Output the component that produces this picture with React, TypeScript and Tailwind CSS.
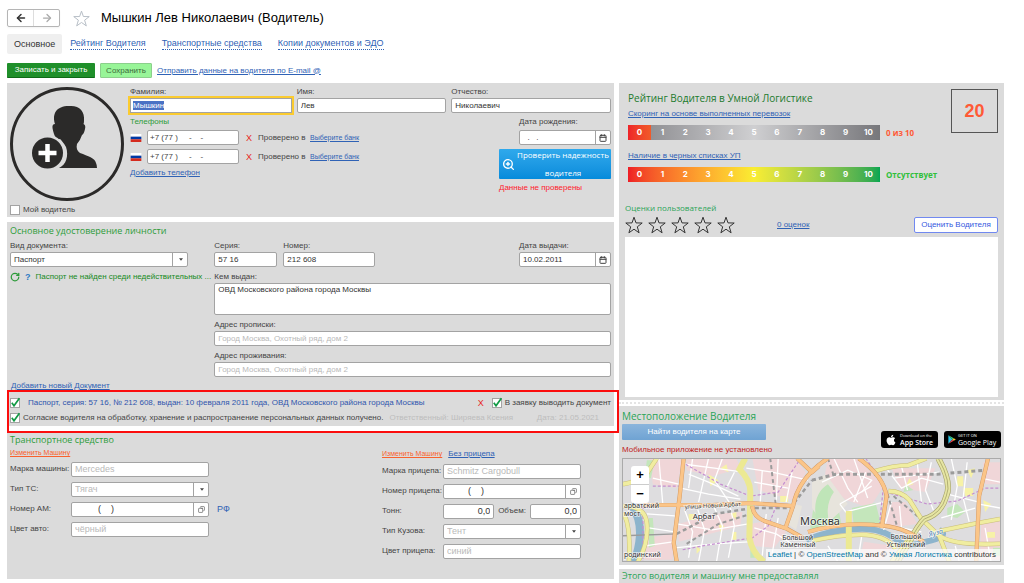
import React, { useEffect, useRef } from 'react';
import { ArrowLeft, ArrowRight, Calendar, Copy, RotateCw, ZoomIn } from 'lucide-react';
import { FaApple } from 'react-icons/fa';

const fieldClass =
  'h-[15px] w-full min-w-0 rounded-[2px] border border-[#a3a3a3] bg-white px-[3px] leading-3 text-[#333] outline-none placeholder:text-[#b9b9b9]';

const linkClass = 'text-[#2f62b5] underline';

interface LabelProps {
  htmlFor: string;
  children: React.ReactNode;
  className?: string;
}

const Label: React.FC<LabelProps> = ({ htmlFor, children, className = '' }) => (
  <label htmlFor={htmlFor} className={`block leading-3 whitespace-nowrap ${className}`}>
    {children}
  </label>
);

interface FieldProps {
  id: string;
  label: string;
  value?: string;
  placeholder?: string;
  className?: string;
}

const Field: React.FC<FieldProps> = ({ id, label, value, placeholder, className = '' }) => (
  <div className={className}>
    <Label htmlFor={id}>{label}</Label>
    <input id={id} type="text" defaultValue={value} placeholder={placeholder} className={`block ${fieldClass}`} />
  </div>
);

interface ButtonFieldProps {
  id: string;
  value?: string;
  placeholder?: string;
  buttonLabel: string;
  icon: React.ReactNode;
  inputClass?: string;
}

// Input with a small button attached to its right edge
const ButtonField: React.FC<ButtonFieldProps> = ({ id, value, placeholder, buttonLabel, icon, inputClass = '' }) => (
  <div className="flex h-[15px] w-full overflow-hidden rounded-[2px] border border-[#a3a3a3] bg-white">
    <input
      id={id}
      type="text"
      defaultValue={value}
      placeholder={placeholder}
      className={`min-w-0 flex-1 px-[3px] text-[#333] outline-none ${inputClass}`}
    />
    <button
      type="button"
      aria-label={buttonLabel}
      className="flex w-[15px] shrink-0 items-center justify-center border-l border-[#a3a3a3] text-[#444]"
    >
      {icon}
    </button>
  </div>
);

interface SelectFieldProps {
  id: string;
  value: string;
  className?: string;
}

const SelectField: React.FC<SelectFieldProps> = ({ id, value, className = '' }) => (
  <div className="relative w-full">
    <select id={id} defaultValue={value} className={`block appearance-none ${fieldClass} ${className}`}>
      <option value={value}>{value}</option>
    </select>
    <span className="pointer-events-none absolute inset-y-0 right-0 flex w-4 items-center justify-center border-l border-[#a3a3a3]">
      <svg viewBox="0 0 6 4" className="h-[3px] w-[4px]">
        <path d="M0 0h6L3 4z" fill="#444" />
      </svg>
    </span>
  </div>
);

interface CheckProps {
  id: string;
  checked?: boolean;
  children: React.ReactNode;
  className?: string;
}

const Check: React.FC<CheckProps> = ({ id, checked = false, children, className = '' }) => (
  <div className={`flex items-center gap-[3px] whitespace-nowrap ${className}`}>
    <span className="relative block h-[10px] w-[10px] shrink-0">
      <input
        id={id}
        type="checkbox"
        defaultChecked={checked}
        className="peer block h-[10px] w-[10px] appearance-none border border-[#a3a3a3] bg-white"
      />
      <svg
        viewBox="0 0 10 10"
        className="pointer-events-none absolute inset-0 hidden h-[10px] w-[10px] overflow-visible peer-checked:block"
      >
        <path d="M1.8 4.8 4 7.8 9.4 0.2" fill="none" stroke="#119a45" strokeWidth="1.7" />
      </svg>
    </span>
    <label htmlFor={id} className="leading-3">
      {children}
    </label>
  </div>
);

const Star: React.FC<{ className?: string; stroke: string }> = ({ className = '', stroke }) => (
  <svg viewBox="0 0 18 18" className={className}>
    <path
      d="M9 1.2 11 6.9 17.2 7 12.3 10.8 14.1 16.8 9 13.2 3.9 16.8 5.7 10.8 0.8 7 7 6.9Z"
      fill="none"
      stroke={stroke}
      strokeWidth="1"
    />
  </svg>
);

const Avatar = () => (
  <svg viewBox="0 0 116 116" className="block h-[116px] w-[116px]">
    <circle cx="58" cy="58" r="55.5" fill="none" stroke="#2b2a29" strokeWidth="3" />
    <path
      d="M60 20C70 19 76 25 75 35Q75 37 74.500 38Q77 39 76 43Q75 48 73 49Q71 55 68 58C67 62 68 65 71 67C79 70 86 72 87 77Q88 79 88 82H50C57 79 60 70 57 61C55 57 52 54 51 53Q47 54 45 48Q44 45 43.500 42Q43 38 46 38C43 28 47 20 60 20Z"
      fill="#2b2a29"
    />
    <circle cx="38.500" cy="67" r="18" fill="#dbdbdb" />
    <circle cx="38.500" cy="67" r="15.500" fill="#2b2a29" />
    <path d="M38.500 58v18M29.500 67h18" stroke="#fff" strokeWidth="4.500" />
  </svg>
);

const Flag = () => (
  <svg viewBox="0 0 12 9" className="h-[8px] w-[12px] shrink-0">
    <path d="M0 0h12v3H0z" fill="#fff" />
    <path d="M0 3h12v3H0z" fill="#0039a6" />
    <path d="M0 6h12v3H0z" fill="#d52b1e" />
  </svg>
);

const scale = [0, 1, 2, 3, 4, 5, 6, 7, 8, 9, 10];

const ScoreBar: React.FC<{ className: string; firstClass?: string }> = ({ className, firstClass = '' }) => (
  <div
    className={`grid h-[15px] w-[252px] grid-cols-11 text-center font-['Inter',sans-serif] text-[8px] leading-[15px] font-bold text-white ${className}`}
  >
    {scale.map((n) => (
      <span key={n} className={n === 0 ? firstClass : ''}>
        {n}
      </span>
    ))}
  </div>
);

const phones = ['phone-1', 'phone-2'];

const DriverPanel = () => {
  const surnameRef = useRef<HTMLInputElement>(null);

  useEffect(() => {
    surnameRef.current?.focus();
    surnameRef.current?.select();
  }, []);

  return (
    <section className="flex h-[134px] gap-[5px] bg-[#dbdbdb] pt-[3px] pr-[3px] pl-[2px]">
      <div className="w-[116px] shrink-0">
        <button type="button" aria-label="Фото" className="block">
          <Avatar />
        </button>
        <Check id="my-driver" className="mt-[2px] pl-px">
          Мой водитель
        </Check>
      </div>
      <div className="min-w-0 flex-1">
        <div className="grid grid-cols-[162fr_150fr_160fr] gap-[5px]">
          <div>
            <Label htmlFor="surname">Фамилия:</Label>
            <input
              id="surname"
              ref={surnameRef}
              type="text"
              defaultValue="Мышкин"
              className="block h-[15px] w-full min-w-0 border border-[#a3a3a3] bg-white px-[2px] outline-2 outline-[#fbcb2f] selection:bg-[#4a72c4] selection:text-white"
            />
          </div>
          <Field id="name" label="Имя:" value="Лев" />
          <Field id="patronymic" label="Отчество:" value="Николаевич" />
        </div>
        <div className="mt-[3px] flex justify-between">
          <div>
            <h2 className="leading-3 text-[#2d9b3a]">Телефоны</h2>
            <div className="mt-[2px] flex flex-col gap-1">
              {phones.map((id) => (
                <div key={id} className="flex items-center whitespace-nowrap">
                  <Flag />
                  <input
                    id={id}
                    type="text"
                    aria-label="Телефон"
                    defaultValue="+7 (77 )     -    -"
                    className="ml-[5px] h-[15px] w-[92px] rounded-[2px] border border-[#a3a3a3] bg-white px-[2px] whitespace-pre outline-none"
                  />
                  <button type="button" aria-label="Удалить телефон" className="ml-[7px] text-[9px] text-[#e8261d]">
                    X
                  </button>
                  <span className="ml-[6px] w-[52px]">Проверено в</span>
                  <a href="#bank" className={`text-[7px] ${linkClass}`}>
                    Выберите банк
                  </a>
                </div>
              ))}
            </div>
            <a href="#add-phone" className={`mt-[3px] inline-block leading-3 ${linkClass}`}>
              Добавить телефон
            </a>
          </div>
          <div className="flex w-[112px] flex-col items-end">
            <div className="w-[92px]">
              <Label htmlFor="birthday">Дата рождения:</Label>
              <div className="mt-[2px]">
                <ButtonField
                  id="birthday"
                  value="  .   ."
                  buttonLabel="Выбрать дату"
                  icon={<Calendar size={8} strokeWidth={3} />}
                />
              </div>
            </div>
            <button
              type="button"
              className="mt-1 flex h-[30px] w-full items-center rounded-[1px] bg-linear-to-b from-[#2fa9ec] to-[#058bdb] pl-[3px] text-white"
            >
              <ZoomIn size={13} strokeWidth={2.5} className="shrink-0" />
              <span className="flex-1 text-center font-['Open_Sans',sans-serif] leading-[18px]">
                Проверить надежность водителя
              </span>
            </button>
            <p className="mt-[3px] w-full leading-3 text-[#ff1a2d]">Данные не проверены</p>
          </div>
        </div>
      </div>
    </section>
  );
};

const DocumentPanel = () => (
  <section className="mt-[5px] bg-[#dbdbdb] pt-[3px]">
    <div className="px-[3px]">
      <h2 className="font-['Open_Sans',sans-serif] text-[9px] leading-3 text-[#2d9b3a]">
        Основное удостоверение личности
      </h2>
      <div className="mt-[3px] grid grid-cols-[1fr_2fr] gap-[6px]">
        <div className="min-w-0">
          <div className="w-[178px]">
            <Label htmlFor="doc-type">Вид документа:</Label>
            <SelectField id="doc-type" value="Паспорт" />
          </div>
          <p className="mt-[4px] flex h-3 items-center gap-[5px] whitespace-nowrap text-[#168a22]">
            <RotateCw size={10} strokeWidth={3} className="shrink-0 text-[#2d9b3a]" />
            <a href="#help" className="text-[9px] font-bold text-[#2d7cc4]">
              ?
            </a>
            <span>Паспорт не найден среди недействительных ...</span>
          </p>
        </div>
        <div className="min-w-0">
          <div className="flex gap-[6px]">
            <Field id="series" label="Серия:" value="57 16" className="w-[63px]" />
            <Field id="number" label="Номер:" value="212 608" className="w-[92px]" />
            <div className="ml-auto w-[92px]">
              <Label htmlFor="issued">Дата выдачи:</Label>
              <ButtonField
                id="issued"
                value="10.02.2011"
                buttonLabel="Выбрать дату"
                icon={<Calendar size={8} strokeWidth={3} />}
              />
            </div>
          </div>
          <div className="mt-[4px]">
            <Label htmlFor="issuer">Кем выдан:</Label>
            <textarea
              id="issuer"
              defaultValue="ОВД Московского района города Москвы"
              className="block h-8 w-full resize-none rounded-[2px] border border-[#a3a3a3] bg-white px-[3px] leading-3 text-[#333] outline-none"
            />
          </div>
          <Field
            id="registration"
            label="Адрес прописки:"
            placeholder="Город Москва, Охотный ряд, дом 2"
            className="mt-1"
          />
          <Field
            id="residence"
            label="Адрес проживания:"
            placeholder="Город Москва, Охотный ряд, дом 2"
            className="mt-1"
          />
        </div>
      </div>
      <a href="#add-doc" className="mt-[3px] ml-px block w-fit leading-3 text-[#2f62b5] underline">
        Добавить новый Документ
      </a>
    </div>
    <div className="relative px-[3px] pt-[3px] pb-px">
      {/* Red frame around the document and consent rows */}
      <div className="pointer-events-none absolute -top-[2px] -right-[5px] -bottom-[7px] left-0 z-10 border-2 border-[#fb0d0d]" />
      <div className="flex h-[15px] items-center justify-between">
        <Check id="doc-row" checked>
          <span className="ml-[5px] text-[#2f55ad]">
            Паспорт, серия: 57 16, № 212 608, выдан: 10 февраля 2011 года, ОВД Московского района города Москвы
          </span>
        </Check>
        <div className="flex items-center gap-2">
          <button type="button" aria-label="Удалить документ" className="text-[9px] text-[#e8261d]">
            X
          </button>
          <Check id="in-request" checked>
            В заявку выводить документ
          </Check>
        </div>
      </div>
      <div className="flex h-[15px] items-center whitespace-nowrap">
        <Check id="consent" checked>
          Согласие водителя на обработку, хранение и распространение персональных данных получено.
        </Check>
        <span className="ml-[6px] text-[#bdbdbd]">Ответственный: Ширяева Ксения</span>
        <span className="mr-3 ml-auto text-[#bdbdbd]">Дата: 21.05.2021</span>
      </div>
    </div>
  </section>
);

interface RowProps {
  id: string;
  label: string;
  children: React.ReactNode;
  after?: React.ReactNode;
}

const Row: React.FC<RowProps> = ({ id, label, children, after }) => (
  <div className="flex h-5 items-center">
    <Label htmlFor={id} className="w-[61px] shrink-0">
      {label}
    </Label>
    <div className="flex w-[138px] shrink-0 items-center text-[9px]">{children}</div>
    {after}
  </div>
);

const VehiclePanel = () => (
  <section className="mt-[5px] grid grid-cols-[372fr_229fr] bg-[#dbdbdb] px-[3px] pt-[3px] pb-[18px]">
    <div>
      <h2 className="font-['Open_Sans',sans-serif] text-[9px] leading-3 text-[#2d9b3a]">Транспортное средство</h2>
      <a href="#truck" className="mt-px block w-fit text-[7px] leading-3 text-[#f9622d] underline">
        Изменить Машину
      </a>
      <Row id="truck-brand" label="Марка машины:">
        <input id="truck-brand" type="text" placeholder="Mercedes" className={fieldClass} />
      </Row>
      <Row id="truck-type" label="Тип ТС:">
        <SelectField id="truck-type" value="Тягач" className="text-[#b9b9b9]" />
      </Row>
      <Row
        id="truck-number"
        label="Номер АМ:"
        after={
          <a href="#country" className="ml-2 text-[9px] text-[#2f62b5]">
            РФ
          </a>
        }
      >
        <ButtonField
          id="truck-number"
          value="(    )"
          buttonLabel="Открыть номер"
          icon={<Copy size={7} className="-scale-x-100" />}
          inputClass="pl-[26px]"
        />
      </Row>
      <Row id="truck-color" label="Цвет авто:">
        <input id="truck-color" type="text" placeholder="чёрный" className={fieldClass} />
      </Row>
    </div>
    <div className="pt-[14px]">
      <div className="flex h-3 items-center gap-[6px] leading-3">
        <a href="#trailer" className="text-[7px] text-[#f9622d] underline">
          Изменить Машину
        </a>
        <a href="#no-trailer" className={linkClass}>
          Без прицепа
        </a>
      </div>
      <div className="mt-px">
        <Row id="trailer-brand" label="Марка прицепа:">
          <input id="trailer-brand" type="text" placeholder="Schmitz Cargobull" className={fieldClass} />
        </Row>
        <Row id="trailer-number" label="Номер прицепа:">
          <ButtonField
            id="trailer-number"
            value="(    )"
            buttonLabel="Открыть номер прицепа"
            icon={<Copy size={7} className="-scale-x-100" />}
            inputClass="pl-[24px]"
          />
        </Row>
        <Row id="tons" label="Тонн:">
          <input id="tons" type="text" defaultValue="0,0" className={`${fieldClass} flex-1 text-right`} />
          <label htmlFor="volume" className="mx-1 shrink-0 text-[8px]">
            Объем:
          </label>
          <input id="volume" type="text" defaultValue="0,0" className={`${fieldClass} flex-1 text-right`} />
        </Row>
        <Row id="body-type" label="Тип Кузова:">
          <SelectField id="body-type" value="Тент" className="text-[#b9b9b9]" />
        </Row>
        <Row id="trailer-color" label="Цвет прицепа:">
          <input id="trailer-color" type="text" placeholder="синий" className={fieldClass} />
        </Row>
      </div>
    </div>
  </section>
);

const RatingPanel = () => (
  <section className="bg-[#dbdbdb] px-[6px] pt-[6px] pb-[3px]">
    <div className="flex items-start justify-between pl-[3px]">
      <div>
        <h2 className="pt-px font-['Open_Sans',sans-serif] text-[10px] leading-4 text-[#1c7a2c]">
          Рейтинг Водителя в Умной Логистике
        </h2>
        <a href="#scoring" className={`mt-[2px] block w-fit leading-3 ${linkClass}`}>
          Скоринг на основе выполненных перевозок
        </a>
        <div className="mt-[5px] flex items-center gap-[6px] font-['Open_Sans',sans-serif]">
          <ScoreBar
            className="bg-linear-to-r from-[#858589] via-[#cfcfd1] to-[#77777b]"
            firstClass="bg-linear-to-r from-[#ee2229] to-[#f15a29]"
          />
          <span className="font-bold text-[#ff5a36]">0 из 10</span>
        </div>
        <a href="#blacklists" className={`mt-[10px] block w-fit leading-3 ${linkClass}`}>
          Наличие в черных списках УП
        </a>
        <div className="mt-[5px] flex items-center gap-[6px] font-['Open_Sans',sans-serif]">
          <ScoreBar className="bg-linear-to-r from-[#ee1c25] via-[#f9ed32] to-[#00a651]" />
          <span className="font-bold text-[#2fbf3a]">Отсутствует</span>
        </div>
      </div>
      <div className="flex h-[44px] w-[47px] shrink-0 items-center justify-center border border-[#555] text-[18px] font-bold text-[#ff5a36]">
        20
      </div>
    </div>
    <h2 className="mt-5 font-['Open_Sans',sans-serif] leading-3 text-[#2aa457]">Оценки пользователей</h2>
    <div className="mt-[2px] flex h-[18px] items-center">
      <div className="flex gap-[5px]">
        {[1, 2, 3, 4, 5].map((n) => (
          <button key={n} type="button" aria-label={`Оценка ${n}`}>
            <Star className="block h-[18px] w-[18px]" stroke="#333" />
          </button>
        ))}
      </div>
      <a href="#reviews" className={`ml-[42px] ${linkClass}`}>
        0 оценок
      </a>
      <button
        type="button"
        className="ml-auto h-4 w-[84px] rounded-[2px] border border-[#7189f0] bg-white text-[#3558e0]"
      >
        Оценить Водителя
      </button>
    </div>
    <div className="mt-[3px] h-[160px] bg-white" />
  </section>
);

const yellowRoads = [
  'M0 26Q22 22 26 12L34 0',
  'M0 48Q22 48 24 65Q26 85 15 104',
  'M0 55Q8 66 6 104',
  'M253 13Q272 7 287 7L305 0',
  'M267 33Q280 33 288 42L300 61L318 78L328 104',
  'M318 73L357 65L379 61',
  'M318 78Q333 88 379 86',
  'M190 83Q220 76 245 77Q266 79 274 91',
  'M300 65L270 104',
];

const orangeRoads = [
  'M61 0L57 38L51 85L54 104',
  'M21 47L90 47L128 45L171 48',
  'M171 48Q176 20 206 0',
  'M175 0L190 14L197 8',
  'M130 48Q131 60 145 64L165 71L181 80',
  'M171 48L163 71',
  'M186 74Q220 64 253 67Q282 68 302 84',
  'M237 0Q262 18 265 38L260 70',
  'M367 0L358 38L355 104',
];

const streets = [
  'M62 6L92 10L121 14',
  'M66 16L86 24L116 38',
  'M70 0L66 30',
  'M86 0L76 44',
  'M100 0L92 22L108 46',
  'M104 30L112 14',
  'M58 30L86 36L118 41',
  'M62 52L70 74L66 100',
  'M74 48L82 72L76 104',
  'M92 50L100 68L94 104',
  'M108 50L112 68L106 100',
  'M54 66L90 72L126 66',
  'M52 90L92 86L126 84',
  'M24 56L52 58',
  'M26 70L52 74',
  'M22 88L50 84',
  'M36 0L40 46',
  'M30 20L56 26',
  'M124 10L150 14L186 22',
  'M132 24L166 30',
  'M140 12L138 44',
  'M156 0L154 46',
  'M170 14L164 44',
  'M132 70L154 76L176 90',
  'M144 56L140 98',
  'M156 60L150 96',
  'M200 24L226 12L250 22L240 34',
  'M218 46L250 28',
  'M218 46L224 54L262 44',
  'M212 0L226 30L236 44',
  'M232 0L246 40',
  'M244 14L232 44',
  'M266 12L280 30L300 20L322 26',
  'M280 8L286 32',
  'M296 6L300 44',
  'M310 4L304 32L312 52',
  'M272 20L318 14',
  'M270 44L262 72',
  'M278 48L280 70L300 74',
  'M330 0L336 28L330 62',
  'M346 4L342 40L348 64',
  'M326 36L358 44',
  'M320 60L354 50',
  'M360 20L379 24',
  'M358 46L379 50',
  'M364 70L370 104',
  'M334 88L338 104',
  'M240 78L236 104',
  'M206 88L216 104',
];

const CityMap = () => (
  <svg viewBox="0 0 379 104" preserveAspectRatio="xMidYMid slice" className="block h-full w-full">
    <path d="M0 0h379v104H0z" fill="#dedddf" />
    {/* Blocks */}
    <g fill="#f0d6d8">
      <path d="M26 0h34l-6 30-24-4zM64 0h50l4 10-28 8-26-6zM130 0h42l12 14-14 28-34-10z" />
      <path d="M56 66l34-10 30-2-2 14-62 16zM128 66l20-4 16 12-12 16-24-2zM24 80l26-4v26H22z" />
      <path d="M206 0h30l26 28-14 22-24-8-22-20zM268 44l16 0 12 22-32 4zM270 10l44 0-10 24-26-4z" />
      <path d="M242 84l28 4-8 14h-24zM360 62h19v40h-20zM362 4h17v22h-15z" />
    </g>
    {/* Parks */}
    <g fill="#c4e6bb">
      <path d="M192 46q2-14 12-26l10 12-14 38-12 2zM230 50l24-5 5 20-27 2zM220 68h-12l8-20zM24 2l8 0-4 18-6-2z" />
      <path d="M326 50l10-4 8 8-8 6-10-2zM128 92l14 8h-14zM26 60l4 0 2 28-6 2zM372 90h7v8h-7zM284 26l8 6-10 2z" />
    </g>
    <g fill="#e7e4dc">
      <path d="M190 24l14-8 22 30-8 8-16 14-12-18zM166 44l14 4-6 24-8-6z" />
    </g>
    <path d="M194 60Q190 36 206 26L212 34Q202 48 208 68L192 70Z" fill="#bfe5b8" />
    <g fill="#f7f2a8">
      <path d="M86 16l10 6-8 6zM98 10l6-4 2 8zM66 56h6v6h-6zM108 56l6-2v8zM96 66l6 2-4 6zM110 74h4v8h-4zM158 38h8v6h-8z" />
      <path d="M336 18h6v10h-6zM346 12l8-2-4 10zM342 30h10v8h-8zM288 20l4 6-8 2zM362 42l8 4-6 8zM366 74h8v6h-8zM74 88l4 4-4 4z" />
    </g>
    {/* Water */}
    <g fill="none" stroke="#8db4cc">
      <path d="M8 46Q18 60 17 78Q16 92 11 104" strokeWidth="8" />
      <path d="M184 82Q215 70 245 71Q264 72 278 84Q290 90 304 84Q330 78 318 72" strokeWidth="6" />
    </g>
    <g fill="none" stroke="#fff" strokeWidth="1.300">
      {streets.map((d) => (
        <path key={d} d={d} />
      ))}
    </g>
    {/* Railways and tunnels */}
    <g fill="none" stroke="#9b9b9b">
      <path d="M0 78Q30 77 54 76" strokeWidth="1.500" />
      <path d="M54 76L92 56L130 50L168 50L190 22" strokeWidth="2.500" strokeDasharray="4 3" />
      <path d="M64 86L96 66L128 56" strokeWidth="2" strokeDasharray="4 3" />
      <path d="M190 22L214 16L316 16L364 12" strokeWidth="3" strokeDasharray="4 3" />
      <path d="M148 0L154 50M206 0L212 18M266 36L276 70M272 38L310 70" strokeWidth="2" strokeDasharray="4 3" />
    </g>
    <g fill="none" stroke="#c58fd0" strokeWidth="1.200" strokeDasharray="3 2">
      <path d="M63 6L98 26L128 38L156 34L176 4" />
      <path d="M30 28H56M60 92L80 88L130 80L146 68L154 48" />
      <path d="M264 34L306 46L336 43L364 30H379M20 48V104M244 0L262 26L258 66" />
    </g>
    <g fill="none" stroke="#c9bd7a" strokeWidth="4.600" strokeLinejoin="round">
      {yellowRoads.map((d) => (
        <path key={d} d={d} />
      ))}
    </g>
    <g fill="none" stroke="#f0eda0" strokeWidth="3.600" strokeLinejoin="round">
      {yellowRoads.map((d) => (
        <path key={d} d={d} />
      ))}
    </g>
    <g fill="none" stroke="#ece993" strokeWidth="6">
      <path d="M123 0L117 11Q128 22 128 34L127 80Q130 96 142 104M227 53V104" />
    </g>
    <path d="M317 0Q331 25 325 38Q320 56 303 61Q296 68 288 84L276 104" fill="none" stroke="#a6a368" strokeWidth="6" />
    <path d="M317 0Q331 25 325 38Q320 56 303 61Q296 68 288 84L276 104" fill="none" stroke="#e6e5a4" strokeWidth="4.800" />
    <path d="M317 0Q331 25 325 38Q320 56 303 61Q296 68 288 84L276 104" fill="none" stroke="#a6a368" strokeWidth="0.800" />
    <g fill="none" stroke="#cf9560" strokeWidth="4.200" strokeLinejoin="round">
      {orangeRoads.map((d) => (
        <path key={d} d={d} />
      ))}
    </g>
    <g fill="none" stroke="#fbc588" strokeWidth="3.400" strokeLinejoin="round">
      {orangeRoads.map((d) => (
        <path key={d} d={d} />
      ))}
    </g>
    {/* Place names */}
    <g fill="#333" stroke="#fff" strokeOpacity="0.7" strokeWidth="1.500" paintOrder="stroke" fontFamily="Noto Sans, sans-serif">
      <text x="178" y="67" fontSize="11">
        Москва
      </text>
      <text x="70" y="61" fontSize="8">
        Арбат
      </text>
      <text x="62" y="51" fontSize="6" transform="rotate(-3 62 51)">
        улица Новый Арбат
      </text>
      <text x="1" y="50" fontSize="7">
        арбатский
      </text>
      <text x="1" y="58" fontSize="7">
        мост
      </text>
      <text x="1" y="99" fontSize="7">
        родинский
      </text>
      <text x="160" y="82" fontSize="7">
        Большой
      </text>
      <text x="158" y="89" fontSize="7">
        Каменный
      </text>
      <text x="269" y="81" fontSize="7">
        Большой
      </text>
      <text x="265" y="89" fontSize="7">
        Устьинский
      </text>
      <text x="308" y="79" fontSize="7" fill="#4a80b5" fontStyle="italic" transform="rotate(-14 308 79)">
        Яуза
      </text>
    </g>
  </svg>
);

const PlayLogo = () => (
  <svg viewBox="0 0 10 11" className="h-[9px] w-2 shrink-0">
    <path d="M0.500 0.300 5.500 5.500 0.500 10.700Z" fill="#28c3e8" />
    <path d="M0.500 0.300 7.200 4 5.500 5.500Z" fill="#3fd07a" />
    <path d="M0.500 10.700 7.200 7 5.500 5.500Z" fill="#ee4350" />
    <path d="M7.200 4 9.800 5.500 7.200 7 5.500 5.500Z" fill="#fbc52f" />
  </svg>
);

const LocationPanel = () => (
  <section className="bg-[#dbdbdb] px-[3px] pt-[2px] pb-[3px]">
    <h2 className="font-['Open_Sans',sans-serif] text-[10px] leading-4 text-[#2aa457]">Местоположение Водителя</h2>
    <div className="flex items-start justify-between">
      <div>
        <button
          type="button"
          className="block h-4 w-[144px] rounded-[1px] bg-linear-to-b from-[#8bb5dc] to-[#6fa3d3] text-white"
        >
          Найти водителя на карте
        </button>
        <p className="mt-1 leading-3 text-[#c01c1c]">Мобильное приложение не установлено</p>
      </div>
      <div className="mt-[7px] flex gap-[6px] text-white">
        <a href="#app-store" className="flex h-[17px] w-[57px] items-center gap-[3px] rounded-[3px] bg-black pl-1">
          <FaApple size={12} className="shrink-0" />
          <span className="font-['Open_Sans',sans-serif] whitespace-nowrap">
            <span className="block text-[4px] leading-[5px]">Download on the</span>
            <span className="block text-[7px] leading-[9px] font-semibold">App Store</span>
          </span>
        </a>
        <a href="#google-play" className="flex h-[17px] w-[57px] items-center gap-[2px] rounded-[3px] bg-black pl-1">
          <PlayLogo />
          <span className="font-['Open_Sans',sans-serif] whitespace-nowrap">
            <span className="block text-[4px] leading-[5px]">GET IT ON</span>
            <span className="block text-[7px] leading-[9px]">Google Play</span>
          </span>
        </a>
      </div>
    </div>
    <div className="relative mt-[2px] h-[104px] overflow-hidden border border-[#aaa]">
      <CityMap />
      <div className="absolute top-[7px] left-2 flex w-[18px] flex-col overflow-hidden rounded-[3px] bg-white text-center text-[13px] leading-[18px] font-bold text-black">
        <button type="button" aria-label="Приблизить" className="border-b border-[#ccc]">
          +
        </button>
        <button type="button" aria-label="Отдалить">
          −
        </button>
      </div>
      <p className="absolute right-0 bottom-0 bg-white/70 pr-1 pl-[2px] leading-3 whitespace-nowrap text-[#333]">
        <a href="#leaflet" className="text-[#0078a8]">
          Leaflet
        </a>{' '}
        | ©{' '}
        <a href="#osm" className="text-[#0078a8]">
          OpenStreetMap
        </a>{' '}
        and ©{' '}
        <a href="#logistics" className="text-[#0078a8]">
          Умная Логистика
        </a>{' '}
        contributors
      </p>
    </div>
  </section>
);

const tabs = [
  { href: '#rating', title: 'Рейтинг Водителя' },
  { href: '#vehicles', title: 'Транспортные средства' },
  { href: '#copies', title: 'Копии документов и ЭДО' },
];

const App: React.FC = () => (
  <div className="h-screen overflow-hidden bg-white pt-[9px] pr-5 pl-[7px] font-['Liberation_Sans',Arial,sans-serif] text-[8px] leading-3 text-[#444]">
    <header>
      <div className="flex h-[18px] items-center">
        <div className="flex h-[18px] w-[53px] rounded-[2px] border border-[#b5b5b5] shadow-xs">
          <button type="button" aria-label="Назад" className="flex flex-1 items-center justify-center border-r border-[#ddd] text-[#333]">
            <ArrowLeft size={12} strokeWidth={3} />
          </button>
          <button type="button" aria-label="Вперёд" className="flex flex-1 items-center justify-center text-[#aaa]">
            <ArrowRight size={12} strokeWidth={2.5} />
          </button>
        </div>
        <button type="button" aria-label="В избранное" className="ml-[13px]">
          <Star className="block h-[17px] w-[17px]" stroke="#b3bac2" />
        </button>
        <h1 className="ml-[11px] text-[13px] leading-[18px] text-black">Мышкин Лев Николаевич (Водитель)</h1>
      </div>
      <nav className="mt-[7px] flex h-5 items-center gap-4 text-[9px]">
        <span className="-mr-2 rounded-[2px] bg-[#efefef] px-[7px] leading-5 text-[#333]">Основное</span>
        {tabs.map((tab) => (
          <a key={tab.href} href={tab.href} className="border-b border-dotted border-[#2f62b5] leading-[11px] text-[#2f62b5]">
            {tab.title}
          </a>
        ))}
      </nav>
      <div className="mt-[9px] flex h-[15px] items-center gap-[5px]">
        <button type="button" className="h-full w-[88px] rounded-[1px] border-b border-[#0f6a18] bg-[#1f8f2a] text-white">
          Записать и закрыть
        </button>
        <button type="button" className="h-full w-[52px] rounded-[1px] border border-[#8ccf8c] bg-[#98f598] text-[#3c6b3c]">
          Сохранить
        </button>
        <a href="#email" className={linkClass}>
          Отправить данные на водителя по E-mail @
        </a>
      </div>
    </header>
    <main className="mt-[5px] grid grid-cols-[607fr_385fr] items-start gap-[5px]">
      <div className="min-w-0">
        <DriverPanel />
        <DocumentPanel />
        <VehiclePanel />
      </div>
      <div className="min-w-0">
        <RatingPanel />
        <div className="my-[2px] border-t-2 border-dotted border-[#e4e4e4]" />
        <LocationPanel />
        <section className="mt-[4px] bg-[#dbdbdb] px-[3px] py-px">
          <h2 className="font-['Open_Sans',sans-serif] text-[9px] leading-3 text-[#2aa457]">
            Этого водителя и машину мне предоставлял
          </h2>
        </section>
      </div>
    </main>
  </div>
);

export default App;
